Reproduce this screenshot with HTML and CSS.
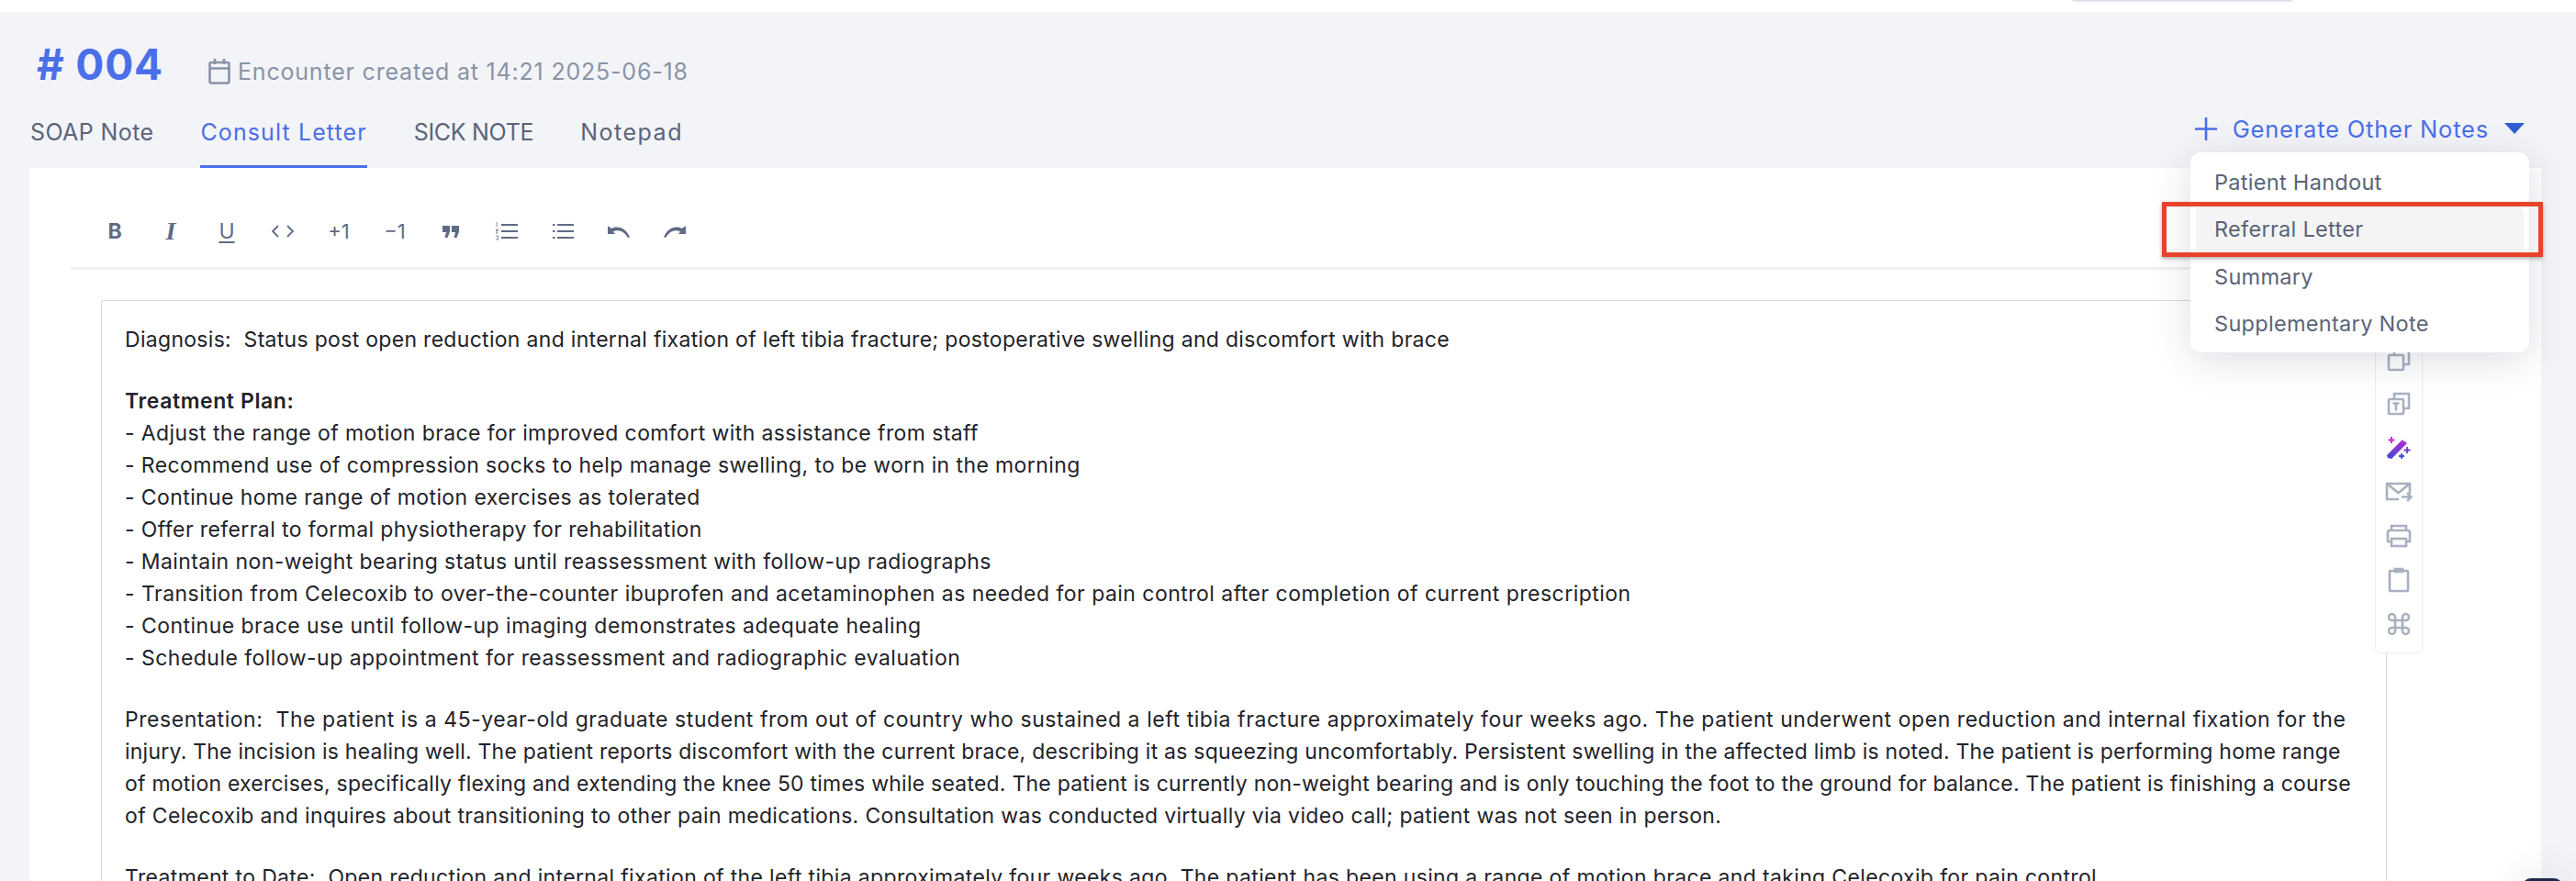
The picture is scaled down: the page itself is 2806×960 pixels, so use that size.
FILE: index.html
```html
<!DOCTYPE html>
<html lang="en">
<head>
  <meta charset="UTF-8">
  <title>Encounter #004</title>
  <link rel="stylesheet" href="styles.css">
</head>
<body>

  <div class="top-strip"><span class="top-pill"></span></div>

  <div class="page">
    <div class="title-row">
      <h1># 004</h1>
      <span class="created">
        <svg width="24" height="28" viewBox="0 0 24 28" fill="none" stroke="#8a93a6" stroke-width="2.6"><rect x="1.500" y="4" width="21" height="22.500" rx="2"/><path d="M1.500 10.500h21M7 0v6M17 0v6"/></svg>
        Encounter created at 14:21 2025-06-18
      </span>
    </div>

    <div class="tabs-row">
      <nav class="tabs">
        <a class="tab tab-soap">SOAP Note</a>
        <a class="tab active">Consult Letter</a>
        <a class="tab tab-sick">SICK NOTE</a>
        <a class="tab tab-pad">Notepad</a>
      </nav>
      <button class="generate">
        <svg width="24" height="25" viewBox="0 0 24 25" fill="none" stroke="#4a6fe8" stroke-width="2.6"><path d="M12 0v25M0 12.500h24"/></svg>
        <span>Generate Other Notes</span>
        <svg width="22" height="12" viewBox="0 0 22 12"><path d="M0 0h22L11 12z" fill="#2f5fd3"/></svg>
      </button>
    </div>

    <div class="card">
      <div class="toolbar">
        <span class="tool tool-b">B</span>
        <span class="tool tool-i">I</span>
        <span class="tool tool-u">U</span>
        <span class="tool"><svg width="24" height="14" viewBox="0 0 24 14" fill="none" stroke="#5f6b85" stroke-width="1.800"><path d="M7 1L1 7l6 6M17 1l6 6-6 6"/></svg></span>
        <span class="tool tool-n">+1</span>
        <span class="tool tool-n">−1</span>
        <span class="tool"><svg width="18" height="13" viewBox="0 0 18 13" fill="#5f6b85"><path d="M0 0h8v6.500L5.500 13H2.500l1.500-6H0zM10 0h8v6.500L15.500 13h-3l1.500-6h-4z"/></svg></span>
        <span class="tool"><svg width="24" height="20" viewBox="0 0 24 20" fill="none" stroke="#5f6b85"><path d="M6 3h18M6 10h18M6 17h18" stroke-width="2"/><path d="M1 0v5M0 8h2.500v1.500H0V12h2.500M0 15h2.500v4H0" stroke-width=".8"/></svg></span>
        <span class="tool"><svg width="23" height="18" viewBox="0 0 23 18" fill="none" stroke="#5f6b85" stroke-width="2"><path d="M5 2h18M5 9h18M5 16h18"/><path d="M0 2h2.500M0 9h2.500M0 16h2.500"/></svg></span>
        <span class="tool"><svg width="24" height="13" viewBox="0 0 25 13"><path d="M0 0v9h8.500L6 6.400C11 4 18 5 22.500 13H25C22 3.500 12-1.500 4.500 2.800z" fill="#5f6b85"/></svg></span>
        <span class="tool"><svg width="24" height="13" viewBox="0 0 25 13"><path d="M25 0v9h-8.500L19 6.400C14 4 7 5 2.500 13H0C3 3.500 13-1.500 20.500 2.800z" fill="#5f6b85"/></svg></span>
      </div>

      <div class="editor">
        <p class="line first">Diagnosis:&nbsp; Status post open reduction and internal fixation of left tibia fracture; postoperative swelling and discomfort with brace</p>
        <p class="blank"></p>
        <p class="line heading">Treatment Plan:</p>
        <p class="line item">- Adjust the range of motion brace for improved comfort with assistance from staff</p>
        <p class="line item">- Recommend use of compression socks to help manage swelling, to be worn in the morning</p>
        <p class="line item">- Continue home range of motion exercises as tolerated</p>
        <p class="line item">- Offer referral to formal physiotherapy for rehabilitation</p>
        <p class="line item">- Maintain non-weight bearing status until reassessment with follow-up radiographs</p>
        <p class="line item-wide">- Transition from Celecoxib to over-the-counter ibuprofen and acetaminophen as needed for pain control after completion of current prescription</p>
        <p class="line item-wide">- Continue brace use until follow-up imaging demonstrates adequate healing</p>
        <p class="line item-wide">- Schedule follow-up appointment for reassessment and radiographic evaluation</p>
        <p class="blank"></p>
        <p class="line para-wide">Presentation:&nbsp; The patient is a 45-year-old graduate student from out of country who sustained a left tibia fracture approximately four weeks ago. The patient underwent open reduction and internal fixation for the</p>
        <p class="line">injury. The incision is healing well. The patient reports discomfort with the current brace, describing it as squeezing uncomfortably. Persistent swelling in the affected limb is noted. The patient is performing home range</p>
        <p class="line">of motion exercises, specifically flexing and extending the knee 50 times while seated. The patient is currently non-weight bearing and is only touching the foot to the ground for balance. The patient is finishing a course</p>
        <p class="line para-mid">of Celecoxib and inquires about transitioning to other pain medications. Consultation was conducted virtually via video call; patient was not seen in person.</p>
        <p class="blank"></p>
        <p class="line para-mid">Treatment to Date:&nbsp; Open reduction and internal fixation of the left tibia approximately four weeks ago. The patient has been using a range of motion brace and taking Celecoxib for pain control.</p>
      </div>

      <div class="side-tools">
        <svg width="26" height="26" viewBox="0 0 26 26" fill="none" stroke="#a9b0bf" stroke-width="2.6"><rect x="2" y="8" width="16" height="16" rx="1"/><path d="M8 8V2h16v16h-6"/></svg>
        <svg width="26" height="26" viewBox="0 0 26 26" fill="none" stroke="#a9b0bf" stroke-width="2.6"><rect x="2" y="8" width="16" height="16" rx="1"/><path d="M8 8V2h16v16h-6"/><path d="M6.500 12.500h7M10 12.500v8"/></svg>
        <svg width="28" height="26" viewBox="0 0 28 26" fill="none"><defs><linearGradient id="wand" x1="0" y1="1" x2="1" y2="0"><stop offset="0" stop-color="#3a4bd8"/><stop offset="1" stop-color="#c026d3"/></linearGradient></defs><path d="M1 21L18 4l5 4-17 17-4-1z" fill="url(#wand)"/><rect x="19" y="2.500" width="3" height="3.500" fill="#fff" transform="rotate(45 20.500 4)"/><path d="M6 1v7M2.500 4.500h7" stroke="#c026d3" stroke-width="1.800"/><path d="M23 12v7M19.500 15.500h7" stroke="#6d3bd0" stroke-width="1.800"/><path d="M17 19v6M14 22h6" stroke="#3a4bd8" stroke-width="1.800"/></svg>
        <svg width="30" height="22" viewBox="0 0 30 22" fill="none" stroke="#a9b0bf" stroke-width="2.6"><path d="M15 19H2V2h25v11M2 2l12.500 10L27 2"/><path d="M18 16.500h10M24 12l4.500 4.500L24 21"/></svg>
        <svg width="28" height="26" viewBox="0 0 28 26" fill="none" stroke="#a9b0bf" stroke-width="2.6"><path d="M6 19H2V9q0-2 2-2h20q2 0 2 2v10h-4"/><path d="M6 7V2h16v5"/><rect x="6" y="16" width="16" height="8"/></svg>
        <svg width="24" height="28" viewBox="0 0 24 28" fill="none" stroke="#a9b0bf" stroke-width="2.6"><rect x="2" y="4" width="20" height="22" rx="1"/><path d="M8 4V2h8v3H8z" fill="#a9b0bf"/></svg>
        <svg width="24" height="24" viewBox="0 0 24 24" fill="none" stroke="#a9b0bf" stroke-width="2.6"><path d="M8 8h8v8H8zM8 8H5a3.500 3.500 0 1 1 3-3zM16 8V5a3.500 3.500 0 1 1 3 3zM16 16h3a3.500 3.500 0 1 1-3 3zM8 16v3a3.500 3.500 0 1 1-3-3z"/></svg>
      </div>
    </div>
  </div>

  <div class="menu">
    <a class="menu-item">Patient Handout</a>
    <a class="menu-item hover">Referral Letter</a>
    <a class="menu-item">Summary</a>
    <a class="menu-item">Supplementary Note</a>
  </div>
  <div class="callout"></div>
  <div class="help-btn"></div>

</body>
</html>
```

FILE: styles.css
```css
html, body { margin: 0; height: 960px; overflow: hidden; }
body { font-family: Inter, "Noto Sans", sans-serif; background-color: #f3f4f8; color: #1f2329; position: relative; }
p { margin: 0; }

.top-strip { height: 13px; background-color: #fff; position: relative; }
.top-pill { position: absolute; left: 2258px; top: -4px; width: 239px; height: 4px; box-shadow: 0 1px 3px #c3c9dc; }

.page { padding: 0 38px 0 32px; }

.title-row { display: flex; align-items: center; box-sizing: border-box; height: 84px; padding: 30px 0 0 8px; }
h1 { margin: 0; font-size: 46px; font-weight: 700; color: #4a6fe8; width: 187px; flex: none; letter-spacing: 0.8px; }
.created { display: flex; align-items: center; gap: 8px; margin-top: 16px; font-size: 25px; color: #8a93a6; letter-spacing: 0.8px; }

.tabs-row { display: flex; justify-content: space-between; height: 86px; }
.tabs { display: flex; gap: 51px; padding: 29px 0 0 1px; }
.tab { box-sizing: border-box; height: 57px; font-size: 25px; line-height: 36px; color: #5a6478; letter-spacing: 0.6px; }
.tab-soap { letter-spacing: 0.4px; }
.tab-sick { letter-spacing: -0.3px; }
.tab-pad { letter-spacing: 1.5px; }
.tab.active { color: #4a6fe8; border-bottom: 3px solid #4a6fe8; letter-spacing: 1.1px; }
.generate { display: flex; align-items: center; gap: 17px; height: 30px; margin: 28px 18px 0 0; padding: 0; background: none; border: none; font: inherit; font-size: 25.5px; letter-spacing: 0.8px; color: #4a6fe8; }

.card { background-color: #fff; height: 777px; overflow: hidden; position: relative; padding: 0 45px; }

.toolbar { display: flex; align-items: center; box-sizing: border-box; height: 111px; padding: 30px 0 0 17.5px; border-bottom: 3px solid #efefef; }
.tool { width: 61px; height: 30px; flex: none; display: flex; align-items: center; justify-content: center; color: #5f6b85; font-size: 22px; }
.tool-b { font-weight: 700; font-size: 23px; }
.tool-i { font-family: "Liberation Serif", serif; font-style: italic; font-weight: 700; font-size: 28px; }
.tool-u { text-decoration: underline; text-decoration-thickness: 2px; text-underline-offset: 3px; font-size: 23px; }
.tool-n { font-size: 22px; }

.editor { margin: 33px 123px 0 33px; border: 1px solid #d9d9d9; border-radius: 3px; height: 640px; padding: 25px; }
.line { font-size: 23px; line-height: 35px; height: 35px; white-space: nowrap; color: #1f2329; letter-spacing: 0.23px; }
.first { letter-spacing: 0.3px; }
.item { letter-spacing: 0.4px; }
.item-wide { letter-spacing: 0.47px; }
.para-wide { letter-spacing: 0.56px; }
.para-mid { letter-spacing: 0.35px; }
.heading { font-weight: 600; letter-spacing: 0.6px; }
.blank { height: 32px; }

/* sits on top of the editor's right edge */
.side-tools { position: absolute; left: 2555px; top: 100px; width: 52px; height: 429px; box-sizing: border-box; padding-bottom: 7px; background-color: #fff; border: 1px solid #ececef; border-radius: 6px; display: flex; flex-direction: column; align-items: center; justify-content: flex-end; }
.side-tools svg { height: 48px; flex: none; }

.menu { position: absolute; left: 2386px; top: 166px; width: 369px; height: 218px; box-sizing: border-box; padding: 7px 6px; background-color: #fff; border-radius: 12px; box-shadow: 0 8px 40px rgba(60,70,100,0.18); }
.menu-item { display: block; height: 51px; line-height: 51px; padding-left: 20px; font-size: 23.5px; letter-spacing: 0.3px; color: #5a6478; border-radius: 8px; }
.menu-item.hover { background-color: #f4f4f5; margin-bottom: 1px; }

.callout { position: absolute; left: 2355px; top: 220px; width: 415px; height: 60px; box-sizing: border-box; border: 5px solid #e8432a; box-shadow: 0 2px 4px rgba(0,0,0,0.3); }

.help-btn { position: absolute; left: 2747px; top: 957px; width: 45px; height: 20px; border-radius: 12px; background-color: #1e2a4a; box-shadow: 0 0 40px rgba(60,70,100,0.2); }
```
